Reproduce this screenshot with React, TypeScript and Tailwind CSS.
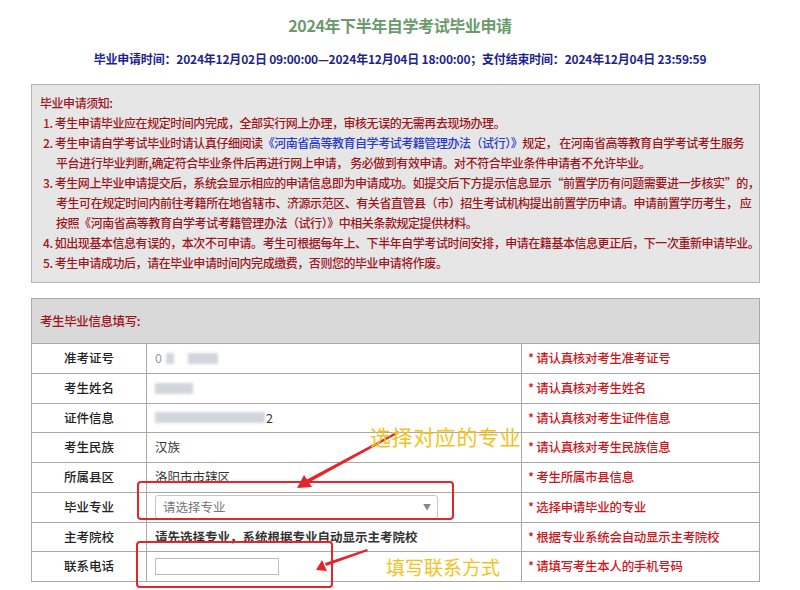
import React from "react";

const font = { fontFamily: '"Noto Sans CJK SC", "Noto Sans", sans-serif' };

interface Row {
  label: string;
  value: React.ReactNode;
  hint: string;
}

function Blur({ w, ml = 0 }: { w: number; ml?: number }) {
  return (
    <span
      className="inline-block h-[11px] bg-gray-300 align-middle blur-[1.5px]"
      style={{ width: w, marginLeft: ml }}
    />
  );
}

const rows: Row[] = [
  {
    label: "准考证号",
    value: (
      <span className="flex items-center text-[#999]">
        <span>0</span>
        <Blur w={8} ml={4} />
        <Blur w={30} ml={14} />
      </span>
    ),
    hint: "* 请认真核对考生准考证号",
  },
  {
    label: "考生姓名",
    value: (
      <span className="flex items-center">
        <Blur w={38} />
      </span>
    ),
    hint: "* 请认真核对考生姓名",
  },
  {
    label: "证件信息",
    value: (
      <span className="flex items-center">
        <Blur w={110} />
        <span className="ml-[1px]">2</span>
      </span>
    ),
    hint: "* 请认真核对考生证件信息",
  },
  { label: "考生民族", value: "汉族", hint: "* 请认真核对考生民族信息" },
  { label: "所属县区", value: "洛阳市市辖区", hint: "* 考生所属市县信息" },
  {
    label: "毕业专业",
    value: (
      <div className="flex h-[24px] w-[283px] items-center justify-between rounded-[3px] border border-[#c8c8c8] bg-white pl-[7px] pr-[6px] text-[#777]">
        <span>请选择专业</span>
        <span className="text-[8px] text-[#888]">▼</span>
      </div>
    ),
    hint: "* 选择申请毕业的专业",
  },
  {
    label: "主考院校",
    value: <span className="font-bold">请先选择专业，系统根据专业自动显示主考院校</span>,
    hint: "* 根据专业系统会自动显示主考院校",
  },
  {
    label: "联系电话",
    value: <div className="h-[17px] w-[124px] border border-[#bdbdbd] bg-white" />,
    hint: "* 请填写考生本人的手机号码",
  },
];

export default function App() {
  return (
    <div className="relative h-[590px] w-[800px] overflow-hidden bg-white" style={font}>
      <div className="pt-[14px] text-center text-[16px] font-bold leading-[22px] tracking-[-0.4px] text-[#6b9a6b]">
        2024年下半年自学考试毕业申请
      </div>
      <div className="mt-[13px] text-center text-[12px] font-bold leading-[20px] tracking-[-0.2px] text-[#1f1f8f]">
        毕业申请时间：2024年12月02日 09:00:00—2024年12月04日 18:00:00；支付结束时间：2024年12月04日 23:59:59
      </div>

      <div className="ml-[31px] mt-[15px] w-[729px] border border-[#b5b5b5] bg-[#e6e6e6] pb-[9px] pl-[8px] pt-[8px] text-[12px] font-medium leading-[20px] tracking-[-0.45px] text-[#a0151b] whitespace-nowrap">
        <div>毕业申请须知:</div>
        <div className="pl-[3px]">1. 考生申请毕业应在规定时间内完成，全部实行网上办理，审核无误的无需再去现场办理。</div>
        <div className="pl-[3px]">
          2. 考生申请自学考试毕业时请认真仔细阅读
          <span className="text-[#2a3ad0]">《河南省高等教育自学考试考籍管理办法（试行）》</span>
          规定， 在河南省高等教育自学考试考生服务
        </div>
        <div className="pl-[16px]">平台进行毕业判断,确定符合毕业条件后再进行网上申请， 务必做到有效申请。对不符合毕业条件申请者不允许毕业。</div>
        <div className="pl-[3px]">3. 考生网上毕业申请提交后，系统会显示相应的申请信息即为申请成功。如提交后下方提示信息显示“前置学历有问题需要进一步核实”的，</div>
        <div className="pl-[16px]">考生可在规定时间内前往考籍所在地省辖市、济源示范区、有关省直管县（市）招生考试机构提出前置学历申请。申请前置学历考生， 应</div>
        <div className="pl-[16px]">按照《河南省高等教育自学考试考籍管理办法（试行）》中相关条款规定提供材料。</div>
        <div className="pl-[3px]">4. 如出现基本信息有误的，本次不可申请。考生可根据每年上、下半年自学考试时间安排，申请在籍基本信息更正后，下一次重新申请毕业。</div>
        <div className="pl-[3px]">5. 考生申请成功后，请在毕业申请时间内完成缴费，否则您的毕业申请将作废。</div>
      </div>

      <table className="ml-[31px] mt-[15px] w-[729px] border-collapse text-[12.5px] text-[#333]">
        <tbody>
          <tr className="h-[45px] bg-[#d9d9d9]">
            <td colSpan={3} className="border border-[#a8a8a8] pl-[8px] font-medium text-[#a0151b] tracking-[-0.4px]">
              考生毕业信息填写:
            </td>
          </tr>
          {rows.map((r) => (
            <tr key={r.label} className="h-[29.75px]">
              <td className="w-[115px] border border-[#a8a8a8] p-0 text-center font-medium text-[#222]">
                {r.label}
              </td>
              <td className="w-[375px] border border-[#a8a8a8] py-0 pl-[8px]">{r.value}</td>
              <td className="border border-[#a8a8a8] py-0 pl-[6px] font-medium text-[#d0141a] tracking-[-0.3px]">
                {r.hint}
              </td>
            </tr>
          ))}
        </tbody>
      </table>

      <svg className="pointer-events-none absolute left-0 top-0" width="800" height="590">
        <rect x="138" y="482" width="315" height="37" rx="3" fill="none" stroke="#e3262a" strokeWidth="2" />
        <rect x="137" y="542" width="195" height="45" rx="3" fill="none" stroke="#e3262a" strokeWidth="2" />
        <polygon points="398,431 399,433 308,483 306,480" fill="#e3262a" />
        <polygon points="297,488 304,475 312,487" fill="#e3262a" />
        <polygon points="367,549 368,551 326,566 325,563" fill="#e3262a" />
        <polygon points="316,570 322,560 327,571" fill="#e3262a" />
      </svg>
      <div className="absolute left-[370px] top-[423px] text-[21px] leading-[26px] tracking-[0.6px] text-[#f2c21b]">
        选择对应的专业
      </div>
      <div className="absolute left-[386px] top-[555px] text-[19px] leading-[24px] text-[#f2c21b]">
        填写联系方式
      </div>
    </div>
  );
}
